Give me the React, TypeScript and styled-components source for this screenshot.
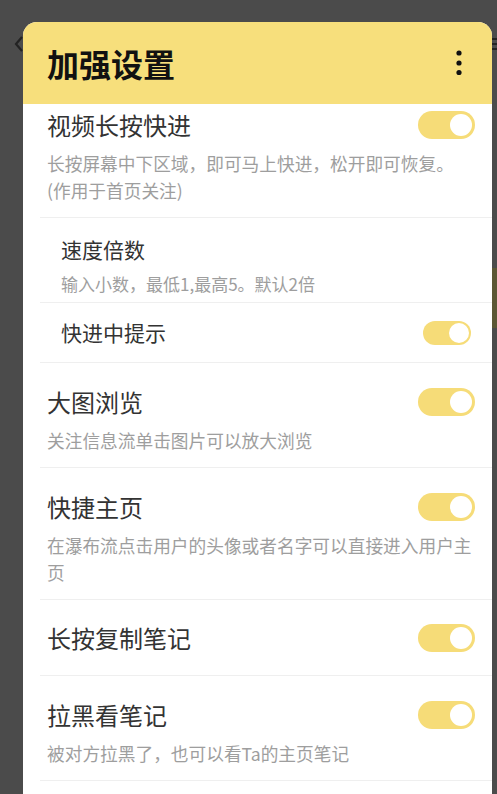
import styled, { createGlobalStyle } from "styled-components";

const GlobalStyle = createGlobalStyle`
  * { box-sizing: border-box; }
  body {
    margin: 0;
    background: #4b4b4b;
    font-family: "Noto Sans CJK SC", "Noto Sans", sans-serif;
  }
`;

interface Setting {
  title: string;
  desc?: string;
  toggle: boolean;
  sub?: boolean;
}

const settings: Setting[] = [
  {
    title: "视频长按快进",
    desc: "长按屏幕中下区域，即可马上快进，松开即可恢复。\n(作用于首页关注)",
    toggle: true,
  },
  { title: "速度倍数", desc: "输入小数，最低1,最高5。默认2倍", toggle: false, sub: true },
  { title: "快进中提示", toggle: true, sub: true },
  { title: "大图浏览", desc: "关注信息流单击图片可以放大浏览", toggle: true },
  {
    title: "快捷主页",
    desc: "在瀑布流点击用户的头像或者名字可以直接进入用户主页",
    toggle: true,
  },
  { title: "长按复制笔记", toggle: true },
  { title: "拉黑看笔记", desc: "被对方拉黑了，也可以看Ta的主页笔记", toggle: true },
];

export default function App() {
  return (
    <Screen>
      <GlobalStyle />
      <BackBar>
        <svg width="12" height="18" viewBox="0 0 12 18">
          <path d="M9 2 L3 9 L9 16" stroke="#232323" strokeWidth="2.2" fill="none" />
        </svg>
        <svg width="14" height="14" viewBox="0 0 14 14">
          <path d="M0 2h14M0 7h14M0 12h14" stroke="#232323" strokeWidth="2" />
        </svg>
      </BackBar>
      <BackBanner />

      <Dialog>
        <Header>
          <Title>加强设置</Title>
          <MoreButton>
            <svg width="6" height="26" viewBox="0 0 6 26">
              <circle cx="3" cy="3" r="2.6" fill="#111" />
              <circle cx="3" cy="13" r="2.6" fill="#111" />
              <circle cx="3" cy="22.5" r="2.6" fill="#111" />
            </svg>
          </MoreButton>
        </Header>
        <Body>
          <List>
            {settings.map((s) => (
              <Row key={s.title} $sub={s.sub} $hasDesc={!!s.desc}>
                <Head $sub={s.sub}>
                  <RowTitle $sub={s.sub}>{s.title}</RowTitle>
                  {s.toggle && (
                    <SwitchSlot>
                      <Track $sub={s.sub}>
                        <Thumb $sub={s.sub} />
                      </Track>
                    </SwitchSlot>
                  )}
                </Head>
                {s.desc && <Desc $sub={s.sub}>{s.desc}</Desc>}
              </Row>
            ))}
          </List>
        </Body>
      </Dialog>
    </Screen>
  );
}

const Screen = styled.div`
  position: relative;
  height: 794px;
  overflow: hidden;
  background: #4b4b4b;
`;

const BackBar = styled.div`
  height: 88px;
  padding: 0 0 0 13px;
  margin-right: -8px;
  display: flex;
  align-items: center;
  justify-content: space-between;
`;

const BackBanner = styled.div`
  margin-top: 180px;
  margin-left: auto;
  width: 40px;
  height: 60px;
  background: #5c5734;
`;

const Dialog = styled.div`
  position: absolute;
  top: 22px;
  left: 23px;
  width: 469px;
  bottom: -20px;
  background: #ffffff;
  border-radius: 14px 14px 0 0;
  overflow: hidden;
  display: flex;
  flex-direction: column;
`;

const Header = styled.div`
  flex: none;
  height: 82px;
  background: #f7df7c;
  display: flex;
  align-items: center;
  justify-content: space-between;
  padding: 0 30px 0 24px;
`;

const Title = styled.h1`
  margin: 0;
  font-size: 32px;
  font-weight: 700;
  color: #111111;
  line-height: 1;
`;

const MoreButton = styled.div`
  display: flex;
  align-items: center;
  height: 26px;
`;

const Body = styled.div`
  flex: 1;
  overflow: hidden;
`;

const List = styled.div`
  margin-top: -18px;
`;

const Row = styled.div<{ $sub?: boolean; $hasDesc: boolean }>`
  margin-left: 17px;
  border-bottom: 1px solid #efefef;
  display: flex;
  flex-direction: column;
  justify-content: center;
  padding-right: 17px;
  padding-left: ${(p) => (p.$sub ? "21px" : "7px")};
  ${(p) =>
    p.$sub
      ? p.$hasDesc
        ? "padding-top: 18px; padding-bottom: 6px;"
        : "min-height: 60px;"
      : p.$hasDesc
      ? "padding-top: 24px; padding-bottom: 13px;"
      : "min-height: 76px;"}
`;

const Head = styled.div<{ $sub?: boolean }>`
  display: flex;
  align-items: center;
  justify-content: space-between;
  height: ${(p) => (p.$sub ? "26px" : "30px")};
`;

const RowTitle = styled.div<{ $sub?: boolean }>`
  font-size: ${(p) => (p.$sub ? "21px" : "24px")};
  color: #333333;
  line-height: 1;
`;

const SwitchSlot = styled.div`
  width: 57px;
  display: flex;
  justify-content: center;
`;

const Track = styled.div<{ $sub?: boolean }>`
  width: ${(p) => (p.$sub ? "48px" : "57px")};
  height: ${(p) => (p.$sub ? "24px" : "28px")};
  border-radius: 14px;
  background: #f6dc78;
  display: flex;
  align-items: center;
  justify-content: flex-end;
  padding-right: ${(p) => (p.$sub ? "2px" : "3px")};
`;

const Thumb = styled.div<{ $sub?: boolean }>`
  width: ${(p) => (p.$sub ? "20px" : "22px")};
  height: ${(p) => (p.$sub ? "20px" : "22px")};
  border-radius: 50%;
  background: #ffffff;
`;

const Desc = styled.div<{ $sub?: boolean }>`
  margin-top: 10px;
  font-size: ${(p) => (p.$sub ? "17px" : "17.7px")};
  line-height: ${(p) => (p.$sub ? "24px" : "27px")};
  color: #9e9e9e;
  white-space: pre-line;
`;
